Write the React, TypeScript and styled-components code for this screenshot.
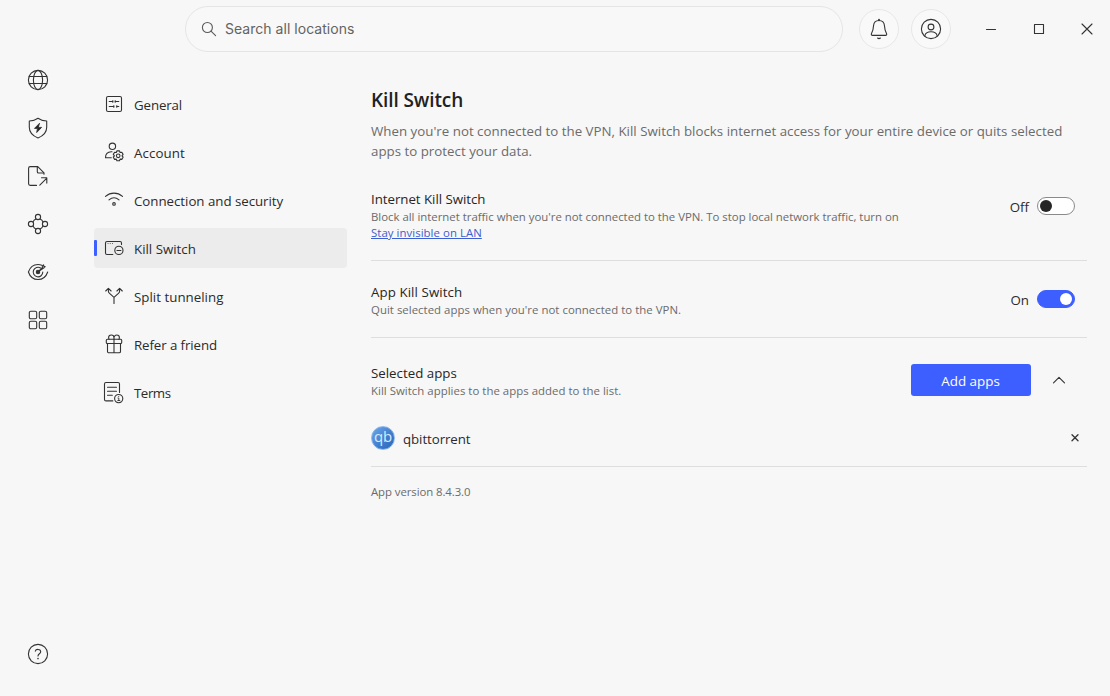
import React from "react";
import styled, { createGlobalStyle } from "styled-components";

const GlobalStyle = createGlobalStyle`
  * { box-sizing: border-box; }
  body {
    margin: 0;
    background: #f7f7f7;
    color: #2b2b2b;
    font-family: "Open Sans", "Noto Sans", sans-serif;
    overflow: hidden;
  }
  button { font: inherit; border: 0; background: none; padding: 0; color: inherit; }
  p, h1, h2 { margin: 0; font-weight: 400; }
`;

const Window = styled.div`
  display: flex;
  flex-direction: column;
  height: 696px;
  width: 1110px;
  overflow: hidden;
`;

const TopBar = styled.header`
  display: flex;
  align-items: center;
  height: 58px;
  padding-left: 185px;
  flex: none;
`;

const SearchBox = styled.div`
  display: flex;
  flex: none;
  align-items: center;
  gap: 3px;
  width: 658px;
  height: 46px;
  padding-left: 12px;
  border: 1px solid #e5e5e5;
  border-radius: 23px;
  background: #f8f8f8;
  color: #636363;
  font-family: Inter, sans-serif;
  font-size: 14px;
  letter-spacing: 0.03px;
`;

const SearchLabel = styled.span`
  line-height: 20px;
  padding-bottom: 1px;
`;

const RoundButton = styled.button`
  display: grid;
  place-items: center;
  width: 40px;
  height: 40px;
  border: 1px solid #e7e7e7;
  border-radius: 50%;
  background: #f9f9f9;
`;

const RoundButtons = styled.div`
  display: flex;
  flex: none;
  gap: 12px;
  margin-left: 16px;
`;

const WindowControls = styled.div`
  display: flex;
  flex: none;
  margin-left: 16px;
`;

const WindowButton = styled.button`
  display: grid;
  place-items: center;
  width: 48px;
  height: 40px;
`;

const Body = styled.div`
  display: flex;
  flex: 1;
  min-height: 0;
`;

const Rail = styled.nav`
  display: flex;
  flex-direction: column;
  align-items: center;
  gap: 24px;
  width: 76px;
  padding: 10px 0 30px;
`;

const RailButton = styled.button<{ $last?: boolean }>`
  display: grid;
  height: 24px;
  margin-top: ${(p) => (p.$last ? "auto" : "0")};
`;

const Menu = styled.nav`
  display: flex;
  flex-direction: column;
  gap: 8px;
  width: 253px;
  margin-left: 18px;
  padding-top: 26px;
`;

const MenuItem = styled.a<{ $active?: boolean }>`
  display: flex;
  align-items: center;
  height: 40px;
  border-radius: 4px;
  background: ${(p) => (p.$active ? "#ececec" : "transparent")};
  font-size: 13.3px;
`;

const Marker = styled.span<{ $active?: boolean }>`
  width: 3px;
  height: 16px;
  margin-right: 5px;
  border-radius: 1px;
  background: ${(p) => (p.$active ? "#3e5fff" : "transparent")};
`;

const MenuLabel = styled.span<{ $track: number }>`
  margin-left: 8px;
  padding-top: 2px;
  line-height: 20px;
  letter-spacing: ${(p) => p.$track}px;
  white-space: nowrap;
`;

const Main = styled.main`
  width: 716px;
  margin-left: 24px;
  padding-top: 28px;
`;

const Title = styled.h1`
  && { font-weight: 600; }
  font-size: 19px;
  line-height: 28px;
  letter-spacing: -0.1px;
  color: #222;
`;

const Description = styled.p`
  margin-top: 7px;
  font-size: 13.3px;
  line-height: 20px;
  letter-spacing: 0.01px;
  color: #6b6b6b;
  white-space: nowrap;
`;

const Setting = styled.section<{ $height: number; $top: number }>`
  display: flex;
  justify-content: space-between;
  height: ${(p) => p.$height}px;
  padding-top: ${(p) => p.$top}px;
  border-bottom: 1px solid #dedede;
`;

const SettingTitle = styled.h2<{ $track?: number }>`
  font-size: 13.3px;
  line-height: 20px;
  letter-spacing: ${(p) => p.$track ?? 0}px;
  color: #262626;
`;

const Small = styled.p<{ $track?: number }>`
  font-size: 11.4px;
  line-height: 16px;
  letter-spacing: ${(p) => p.$track ?? 0}px;
  color: #6b6b6b;
  white-space: nowrap;
`;

const Link = styled.a`
  color: #3b5ed0;
  letter-spacing: 0.05px;
  text-decoration: underline;
  text-underline-offset: 1px;
`;

const Control = styled.div`
  display: flex;
  gap: 8px;
  height: 18px;
  margin: 8px 12px 0 0;
  font-size: 13.3px;
  line-height: 20px;
`;

const Track = styled.span<{ $on?: boolean }>`
  display: flex;
  align-items: center;
  justify-content: ${(p) => (p.$on ? "flex-end" : "flex-start")};
  width: 38px;
  height: 18px;
  padding: 0 2px;
  border: 1px solid ${(p) => (p.$on ? "#3e5fff" : "#8a8a8a")};
  border-radius: 9px;
  background: ${(p) => (p.$on ? "#3e5fff" : "#fff")};
`;

const Knob = styled.span<{ $on?: boolean }>`
  width: 12px;
  height: 12px;
  border-radius: 50%;
  background: ${(p) => (p.$on ? "#fff" : "#262626")};
`;

const AppsPanel = styled.section`
  height: 129px;
  padding-top: 25px;
  border-bottom: 1px solid #dedede;
`;

const AppsHeader = styled.div`
  display: flex;
  justify-content: space-between;
`;

const AppsActions = styled.div`
  display: flex;
  align-items: center;
  gap: 16px;
  height: 32px;
  margin: 1px 16px 0 0;
`;

const AddButton = styled.button`
  && {
    width: 120px;
    height: 32px;
    padding: 2px 1px 0 0;
    border-radius: 3px;
    background: #3e5fff;
    color: #fff;
    font-size: 13.4px;
  }
`;

const AppRow = styled.div`
  display: flex;
  align-items: center;
  gap: 8px;
  height: 24px;
  margin-top: 27px;
  padding-right: 6px;
  font-size: 13.3px;
`;

const AppName = styled.span`
  padding-top: 2px;
  flex: 1;
  letter-spacing: -0.08px;
`;

const AppLogo = styled.span`
  display: flex;
  justify-content: center;
  width: 24px;
  height: 24px;
  border: 1px solid #8db8ea;
  border-radius: 50%;
  background: linear-gradient(135deg, #6fa8e6, #3c7bce 60%, #2e64b4);
  color: #d8eafc;
  font-size: 15px;
  line-height: 19px;
  letter-spacing: -0.3px;
`;

const Version = styled(Small)`
  margin-top: 17px;
`;

const Svg = styled.svg`
  display: block;
  fill: none;
  stroke: #333;
  stroke-width: 1.1;
  stroke-linecap: round;
  stroke-linejoin: round;
`;

type IconProps = { children: React.ReactNode; size?: number };
const Icon = ({ children, size = 24 }: IconProps) => (
  <Svg width={size} height={size} viewBox={`0 0 ${size} ${size}`}>
    {children}
  </Svg>
);

const icons = {
  globe: (
    <>
      <circle cx="12" cy="12" r="9.6" />
      <ellipse cx="12" cy="12" rx="4.6" ry="9.6" />
      <path d="M3.200 8.500h17.600M3.200 15.500h17.600" />
    </>
  ),
  shield: (
    <>
      <path d="M12 2.300c2.400 1.700 5.400 2.600 8.700 2.700v6.200c0 5-3.200 8.500-8.700 10.700-5.500-2.200-8.700-5.700-8.700-10.700V5c3.300-.1 6.300-1 8.700-2.700z" />
      <path d="M13.300 7.500 8.500 12.400h3l-.8 4.100 4.900-5.100h-3z" fill="#222" strokeWidth=".9" />
    </>
  ),
  file: (
    <>
      <path d="M10.500 21.400H4.200a1.600 1.600 0 0 1-1.600-1.600V4.200a1.600 1.600 0 0 1 1.600-1.600h7.600l6.200 6.200v1.500" />
      <path d="M11.300 2.700v5a1.300 1.300 0 0 0 1.300 1.300h5" />
      <path d="M13.800 21.200l7-7M15.500 13.800h5.300v5.300" />
    </>
  ),
  mesh: (
    <>
      <circle cx="12" cy="12" r="5.400" />
      <g fill="#f7f7f7">
        <circle cx="12" cy="5" r="2.600" />
        <circle cx="12" cy="19" r="2.600" />
        <circle cx="5" cy="12" r="2.600" />
        <circle cx="19" cy="12" r="2.600" />
      </g>
    </>
  ),
  eye: (
    <>
      <path d="M15.800 5.200A10.800 10.800 0 0 0 12 4.500C7.600 4.500 4 7.300 2.400 12c1.600 4.700 5.200 7.500 9.600 7.500s8.100-2.800 9.700-7.500" />
      <path d="M14.600 8A4.800 4.800 0 1 0 16.800 12" />
      <path d="M12.500 11.500 16.500 7.500l-.2-1.500 1.300-1.100.2 1.500 1.300.2-1.100 1.200z" />
      <circle cx="12" cy="12" r="1.700" fill="#333" />
    </>
  ),
  grid: (
    <>
      <rect x="3.300" y="3.300" width="7.400" height="7.400" rx="1.500" />
      <rect x="13.300" y="3.300" width="7.400" height="7.400" rx="1.500" />
      <rect x="3.300" y="13.300" width="7.400" height="7.400" rx="1.500" />
      <rect x="13.300" y="13.300" width="7.400" height="7.400" rx="1.500" />
    </>
  ),
  help: (
    <>
      <circle cx="12" cy="12" r="9.600" />
      <path d="M9.300 9.200c.5-2.400 5.400-2.500 5.400.5 0 2.200-2.700 2-2.700 4.300" />
      <circle cx="12" cy="16.500" r=".3" fill="#333" />
    </>
  ),
  search: (
    <>
      <circle cx="9.400" cy="10.500" r="5" stroke="#5a5a5a" />
      <path d="M13 14.200l4.600 4.500" stroke="#5a5a5a" />
    </>
  ),
  bell: (
    <>
      <path d="M12 3.500c-3.200 0-5.300 2.300-5.500 5.500-.2 3.800-.8 5.500-2 7.600-.5.900-.1 1.800 1 1.800h13c1.100 0 1.500-.9 1-1.800-1.200-2.100-1.800-3.800-2-7.600-.2-3.200-2.300-5.500-5.500-5.500z" />
      <path d="M12 3.300v-.6" strokeWidth="1.800" />
      <path d="M10.600 21c.8.700 2 .7 2.800 0" />
    </>
  ),
  user: (
    <>
      <circle cx="12" cy="12" r="9.600" />
      <circle cx="12" cy="10" r="2.900" />
      <path d="M5.800 19c.5-3 2.500-4.200 6.200-4.200s5.700 1.200 6.200 4.200" />
    </>
  ),
  general: (
    <>
      <rect x="4.500" y="4.500" width="15" height="15" rx="1.600" />
      <path d="M7.200 9.500h3.600M13.200 9.500h3.600M7.200 14.500h4.600M14.800 14.500h2M10.800 8.600v1.800M13.200 8.600v1.800M11.800 13.600v1.800M14.800 13.600v1.800" strokeWidth="1" />
    </>
  ),
  account: (
    <>
      <circle cx="10.400" cy="6.300" r="3.200" />
      <path d="M9.300 17.700H3.500c0-3.600 1.700-5.700 5.800-5.900h.7" />
      <circle cx="16.200" cy="15.800" r="1.800" />
      <path d="M14.900 10.900h2.600l.6 1.600 1.700-.3 1.300 2.200-1.100 1.400 1.100 1.400-1.300 2.200-1.700-.3-.6 1.600h-2.600l-.6-1.600-1.700.3-1.300-2.200 1.100-1.400-1.100-1.400 1.300-2.200 1.700.3z" />
    </>
  ),
  wifi: (
    <>
      <path d="M3.500 8.300c5-4.300 12-4.300 17 0M7 11.900c3-2.600 7-2.600 10 0" />
      <circle cx="12" cy="15.900" r="1.300" />
    </>
  ),
  kill: (
    <>
      <path d="M10.800 18.500H5A1.500 1.500 0 0 1 3.500 17V7A1.500 1.500 0 0 1 5 5.500h13A1.500 1.500 0 0 1 19.500 7v1.500" />
      <path d="M6 7.500h.1M8.200 7.500h.1M10.400 7.500h.1" strokeWidth=".8" />
      <circle cx="16.900" cy="14.400" r="4.100" />
      <path d="M14.900 14.500h4" />
    </>
  ),
  split: (
    <>
      <path d="M12 19.500V13.300M12 13.300 7.300 9.200Q6.400 8.400 6.400 7.200V4.500M12 13.300l4.700-4.100Q17.600 8.400 17.600 7.200V4.500" />
      <path d="M3.700 7 6.400 4.300l2.700 2.700M14.900 7 17.600 4.300l2.700 2.700" />
    </>
  ),
  gift: (
    <>
      <rect x="4.300" y="7.300" width="15.400" height="4.200" rx="1" />
      <path d="M5.500 11.500v8a1.300 1.300 0 0 0 1.300 1.300h10.400a1.300 1.300 0 0 0 1.300-1.300v-8M12 7.300v13.500" />
      <path d="M12 7.300V5.700a2.700 2.700 0 0 0-5.400 0c0 .6.200 1.100.6 1.600M12 7.300V5.700a2.700 2.700 0 0 1 5.400 0c0 .6-.2 1.100-.6 1.600" />
    </>
  ),
  terms: (
    <>
      <path d="M10.800 20.900H4a1.500 1.500 0 0 1-1.500-1.500V4A1.500 1.500 0 0 1 4 2.500h12A1.500 1.500 0 0 1 17.500 4v8.500" />
      <path d="M5.500 7.300h9M5.500 11.300h9M5.500 15.300h4.800" />
      <circle cx="16.700" cy="18.600" r="4.100" />
      <path d="M16 18h.8v2.500M15.800 20.500h2M16.700 16.400v.1" strokeWidth=".9" />
    </>
  ),
};

type IconName = keyof typeof icons;

const rail: IconName[] = ["globe", "shield", "file", "mesh", "eye", "grid"];

const menu: { icon: IconName; label: string; track: number }[] = [
  { icon: "general", label: "General", track: -0.12 },
  { icon: "account", label: "Account", track: 0.08 },
  { icon: "wifi", label: "Connection and security", track: -0.03 },
  { icon: "kill", label: "Kill Switch", track: 0 },
  { icon: "split", label: "Split tunneling", track: 0.02 },
  { icon: "gift", label: "Refer a friend", track: -0.1 },
  { icon: "terms", label: "Terms", track: -0.45 },
];

const Toggle = ({ on }: { on?: boolean }) => (
  <Control>
    <span>{on ? "On" : "Off"}</span>
    <Track $on={on}>
      <Knob $on={on} />
    </Track>
  </Control>
);

export default function App() {
  return (
    <>
      <GlobalStyle />
      <Window>
        <TopBar>
          <SearchBox>
            <Icon>{icons.search}</Icon>
            <SearchLabel>Search all locations</SearchLabel>
          </SearchBox>
          <RoundButtons>
            <RoundButton aria-label="Notifications"><Icon>{icons.bell}</Icon></RoundButton>
            <RoundButton aria-label="Profile"><Icon>{icons.user}</Icon></RoundButton>
          </RoundButtons>
          <WindowControls>
            <WindowButton aria-label="Minimize"><Icon size={12}><path d="M1.500 6.500h9" /></Icon></WindowButton>
            <WindowButton aria-label="Maximize"><Icon size={12}><rect x="1.500" y="1.500" width="9" height="9" /></Icon></WindowButton>
            <WindowButton aria-label="Close"><Icon size={12}><path d="M1 1l10 10M11 1L1 11" /></Icon></WindowButton>
          </WindowControls>
        </TopBar>
        <Body>
          <Rail>
            {rail.map((name) => (
              <RailButton key={name} aria-label={name}><Icon>{icons[name]}</Icon></RailButton>
            ))}
            <RailButton $last aria-label="Help"><Icon>{icons.help}</Icon></RailButton>
          </Rail>
          <Menu>
            {menu.map((item) => {
              const active = item.label === "Kill Switch";
              return (
                <MenuItem key={item.label} $active={active}>
                  <Marker $active={active} />
                  <Icon>{icons[item.icon]}</Icon>
                  <MenuLabel $track={item.track}>{item.label}</MenuLabel>
                </MenuItem>
              );
            })}
          </Menu>
          <Main>
            <Title>Kill Switch</Title>
            <Description>
              When you're not connected to the VPN, Kill Switch blocks internet access for your entire device or quits selected
              <br />
              apps to protect your data.
            </Description>
            <Setting $height={100} $top={28}>
              <div>
                <SettingTitle $track={-0.04}>Internet Kill Switch</SettingTitle>
                <Small $track={-0.01}>
                  Block all internet traffic when you're not connected to the VPN. To stop local network traffic, turn on
                  <br />
                  <Link>Stay invisible on LAN</Link>
                </Small>
              </div>
              <Toggle />
            </Setting>
            <Setting $height={77} $top={21}>
              <div>
                <SettingTitle $track={0.08}>App Kill Switch</SettingTitle>
                <Small $track={0.03}>Quit selected apps when you're not connected to the VPN.</Small>
              </div>
              <Toggle on />
            </Setting>
            <AppsPanel>
              <AppsHeader>
                <div>
                  <SettingTitle>Selected apps</SettingTitle>
                  <Small $track={0.03}>Kill Switch applies to the apps added to the list.</Small>
                </div>
                <AppsActions>
                  <AddButton>Add apps</AddButton>
                  <Icon><path d="M6.500 14.800 12 9.300l5.500 5.500" /></Icon>
                </AppsActions>
              </AppsHeader>
              <AppRow>
                <AppLogo>qb</AppLogo>
                <AppName>qbittorrent</AppName>
                <Icon size={12}><path d="M3 2.800l6 6M9 2.800l-6 6" strokeWidth="1.300" /></Icon>
              </AppRow>
            </AppsPanel>
            <Version $track={-0.08}>App version 8.4.3.0</Version>
          </Main>
        </Body>
      </Window>
    </>
  );
}
